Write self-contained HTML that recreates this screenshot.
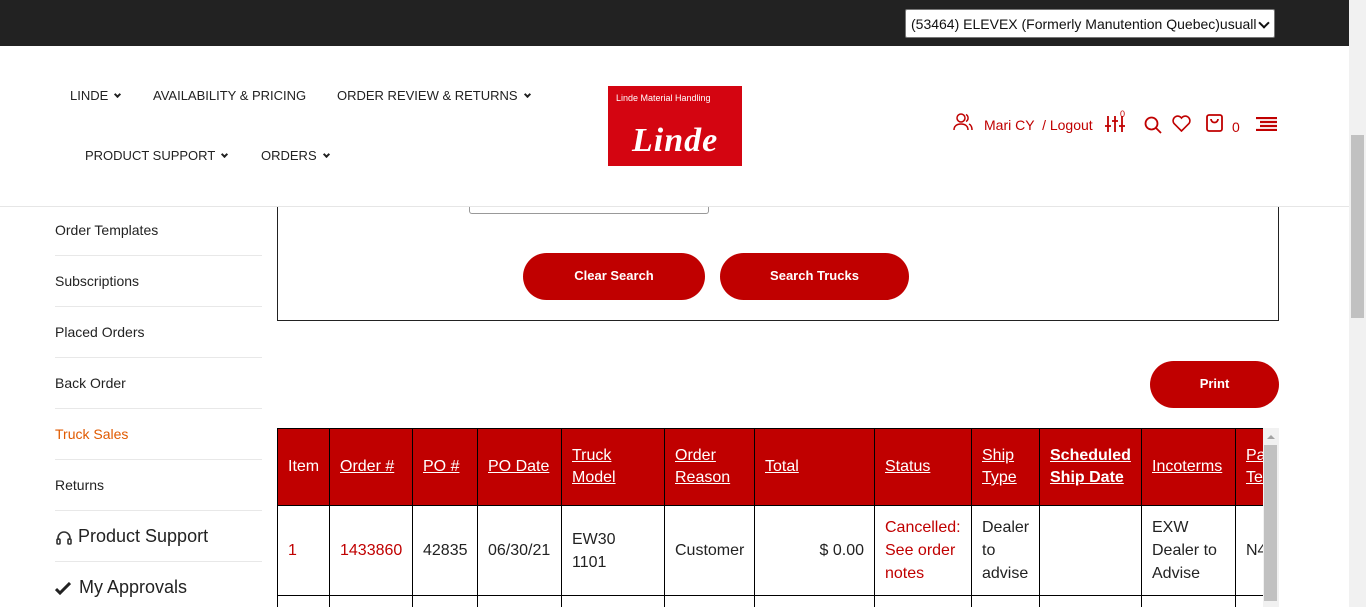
<!DOCTYPE html>
<html><head><meta charset="utf-8"><style>
*{box-sizing:border-box;margin:0;padding:0}
html,body{width:1366px;height:607px;overflow:hidden}
body{font-family:"Liberation Sans",Arial,sans-serif;background:#fff;position:relative;color:#222}
.top{position:absolute;left:0;top:0;width:1349px;height:46px;background:#222;z-index:5}
.sel{position:absolute;left:905px;top:9px;width:370px;height:29px;background:#fff;border:1px solid #767676;border-radius:2px;font-size:14px;color:#111;padding:6px 5px;white-space:nowrap;overflow:hidden}
.sel:after{content:"";position:absolute;right:6px;top:9px;width:6px;height:6px;border-right:2px solid #111;border-bottom:2px solid #111;transform:rotate(45deg);background:#fff}
.hdr{position:absolute;left:0;top:46px;width:1349px;height:161px;background:#fff;border-bottom:1px solid #e6e6e6;z-index:4}
.nav{position:absolute;font-size:13px;color:#222;white-space:nowrap;z-index:6}
.car{display:inline-block;width:5px;height:5px;border-right:2px solid #222;border-bottom:2px solid #222;transform:rotate(45deg);margin-left:7px;position:relative;top:-3px}
.logo{position:absolute;left:608px;top:86px;width:134px;height:80px;background:#d40511;z-index:6}
.logo .s{position:absolute;left:8px;top:7px;color:#fff;font-size:9px}
.logo .b{position:absolute;left:24px;top:36px;color:#fff;font:italic bold 34px "Liberation Serif",serif;letter-spacing:1px}
.red{color:#c00000}
.ic{position:absolute;z-index:6}
.sb{position:absolute;left:1349px;top:0;width:17px;height:607px;background:#f1f1f1;z-index:9}
.sb i{position:absolute;left:2px;top:135px;width:13px;height:183px;background:#c1c1c1}
.side a{position:absolute;left:55px;font-size:14px;color:#222;text-decoration:none}
.side .ln{position:absolute;left:55px;width:207px;height:1px;background:#e8e8e8}
.box{position:absolute;left:277px;top:190px;width:1002px;height:131px;border:1px solid #222;border-top:none}
.btn{position:absolute;background:#c00000;color:#fff;font-weight:bold;font-size:13px;border-radius:24px;text-align:center;height:47px;line-height:45px}
table{border-collapse:collapse;font-size:16px;table-layout:fixed;width:1018px}
th{background:#c00000;color:#fff;font-weight:normal;text-align:left;padding:0 10px;height:77px;border:1px solid #000;line-height:22px}
td{border:1px solid #000;padding:0 10px;height:90px;line-height:23px;vertical-align:middle;color:#222}
.wrap{position:absolute;left:277px;top:428px;width:986px;height:179px;overflow:hidden}
</style></head><body>
<div class="top"><div class="sel">(53464) ELEVEX (Formerly Manutention Quebec)usuall</div></div>
<div class="hdr"></div>
<div class="nav" style="left:70px;top:88px">LINDE<span class="car"></span></div>
<div class="nav" style="left:153px;top:88px">AVAILABILITY &amp; PRICING</div>
<div class="nav" style="left:337px;top:88px">ORDER REVIEW &amp; RETURNS<span class="car"></span></div>
<div class="nav" style="left:85px;top:148px">PRODUCT SUPPORT<span class="car"></span></div>
<div class="nav" style="left:261px;top:148px">ORDERS<span class="car"></span></div>
<div class="logo"><div class="s">Linde Material Handling</div><div class="b">Linde</div></div>
<svg class="ic" style="left:953px;top:113px" width="20" height="18" viewBox="0 0 20 18" fill="none" stroke="#c00000" stroke-width="1.5"><circle cx="8" cy="5" r="4"/><path d="M1 17c0-4 3-6 7-6s7 2 7 6M13 1.5a4 4 0 0 1 0 7M16 11c2 1 3 3 3 6"/></svg>
<div class="nav red" style="left:984px;top:117px;font-size:14px">Mari CY &nbsp;/ Logout</div>
<svg class="ic" style="left:1105px;top:115px" width="20" height="18" viewBox="0 0 20 18" stroke="#c00000" stroke-width="1.8"><path d="M3 1v16M10 1v16M17 1v16M0 11h6M7 6h6M14 11h6"/></svg>
<div class="nav red" style="left:1120px;top:109px;font-size:9px">0</div>
<svg class="ic" style="left:1144px;top:116px" width="18" height="18" viewBox="0 0 18 18" fill="none" stroke="#c00000" stroke-width="1.8"><circle cx="7.5" cy="7.5" r="6"/><path d="M12 12l5 5"/></svg>
<svg class="ic" style="left:1172px;top:115px" width="19" height="17" viewBox="0 0 19 17" fill="none" stroke="#c00000" stroke-width="1.6"><path d="M9.5 16L2 8.5A4.3 4.3 0 0 1 9.5 3a4.3 4.3 0 0 1 7.5 5.5z"/></svg>
<svg class="ic" style="left:1206px;top:114px" width="17" height="18" viewBox="0 0 17 18" fill="none" stroke="#c00000" stroke-width="1.8"><rect x="1" y="1" width="15" height="16" rx="2"/><path d="M5 5a3.5 3.5 0 0 0 7 0"/></svg>
<div class="nav red" style="left:1232px;top:119px;font-size:14px">0</div>
<svg class="ic" style="left:1256px;top:117px" width="22" height="14" viewBox="0 0 22 14" stroke="#c00000" stroke-width="2.2"><path d="M0 1h21M4 5h17M4 9h17M0 13h21"/></svg>
<div class="side">
<a style="top:222px">Order Templates</a><div class="ln" style="top:255px"></div>
<a style="top:273px">Subscriptions</a><div class="ln" style="top:306px"></div>
<a style="top:324px">Placed Orders</a><div class="ln" style="top:357px"></div>
<a style="top:375px">Back Order</a><div class="ln" style="top:408px"></div>
<a style="top:426px;color:#e05a00">Truck Sales</a><div class="ln" style="top:459px"></div>
<a style="top:477px">Returns</a><div class="ln" style="top:510px"></div>
<a style="top:526px;font-size:18px;left:78px">Product Support</a>
<svg style="position:absolute;left:56px;top:530px" width="16" height="16" viewBox="0 0 16 16" fill="none" stroke="#333" stroke-width="1.6"><path d="M2 10V8a6 6 0 0 1 12 0v2"/><rect x="1" y="9" width="3" height="5" rx="1"/><rect x="12" y="9" width="3" height="5" rx="1"/></svg>
<div class="ln" style="top:561px"></div>
<a style="top:577px;font-size:18px;left:79px">My Approvals</a>
<svg style="position:absolute;left:55px;top:582px" width="16" height="13" viewBox="0 0 16 13"><path d="M1 7l4 4 10-10" fill="none" stroke="#222" stroke-width="3"/></svg>
</div>
<div class="box"></div>
<div style="position:absolute;left:469px;top:190px;width:240px;height:24px;border:1px solid #999;border-top:none;border-radius:0 0 3px 3px"></div>
<div class="btn" style="left:523px;top:253px;width:182px">Clear Search</div>
<div class="btn" style="left:720px;top:253px;width:189px">Search Trucks</div>
<div class="btn" style="left:1150px;top:361px;width:129px">Print</div>
<div class="wrap"><table>
<colgroup><col style="width:52px"><col style="width:83px"><col style="width:65px"><col style="width:84px"><col style="width:103px"><col style="width:90px"><col style="width:120px"><col style="width:97px"><col style="width:68px"><col style="width:102px"><col style="width:94px"><col style="width:60px"></colgroup>
<tr><th>Item</th><th><u>Order #</u></th><th><u>PO #</u></th><th><u>PO Date</u></th><th><u>Truck Model</u></th><th><u>Order Reason</u></th><th><u>Total</u></th><th><u>Status</u></th><th><u>Ship Type</u></th><th style="font-weight:bold"><u>Scheduled Ship Date</u></th><th><u>Incoterms</u></th><th><u>Pay Terms</u></th></tr>
<tr><td class="red">1</td><td class="red">1433860</td><td>42835</td><td>06/30/21</td><td>EW30<br>1101</td><td>Customer</td><td style="text-align:right">$ 0.00</td><td class="red">Cancelled: See order notes</td><td>Dealer to advise</td><td></td><td>EXW Dealer to Advise</td><td>N45</td></tr>
<tr><td></td><td></td><td></td><td></td><td></td><td></td><td></td><td></td><td></td><td></td><td></td><td></td></tr>
</table></div>
<div style="position:absolute;left:1263px;top:428px;width:16px;height:179px;background:#f1f1f1"><div style="position:absolute;left:1px;top:17px;width:13px;height:156px;background:#c1c1c1"></div><div style="position:absolute;left:4px;top:7px;border:4px solid transparent;border-bottom-color:#a3a3a3;border-top:none"></div></div>
<div class="sb"><i></i></div>
</body></html>
